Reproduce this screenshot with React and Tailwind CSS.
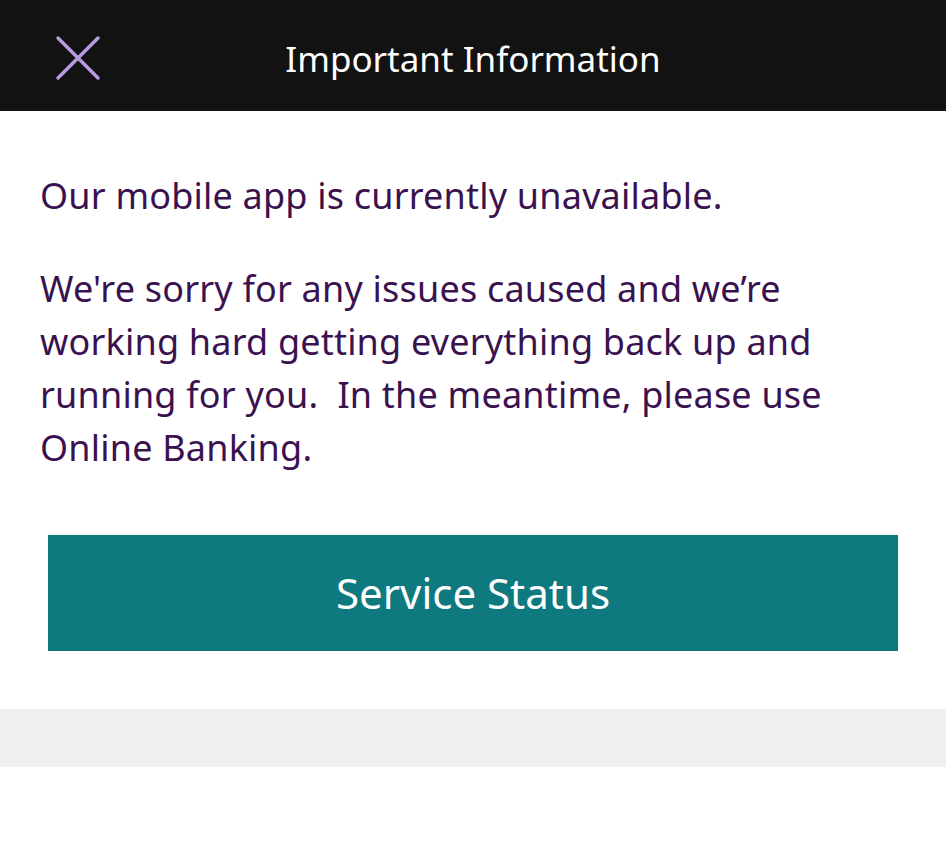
export default function App() {
  return (
    <div className="w-[946px] h-[845px] bg-white font-['Noto_Sans','Open_Sans',sans-serif]">
      <header className="h-[111px] bg-[#121212] flex items-center relative">
        <button className="absolute left-[55px] top-[35px] w-[46px] h-[46px]">
          <svg viewBox="0 0 46 46" className="w-[46px] h-[46px]">
            <path d="M3 3 L43 43 M43 3 L3 43" stroke="#b79ae0" strokeWidth="3.5" strokeLinecap="round" fill="none" />
          </svg>
        </button>
        <h1 className="w-full text-center text-white text-[35px] pt-[8px]">Important Information</h1>
      </header>

      <main className="px-[40px] text-[#3a1250] text-[36px] leading-[53px] tracking-[0.2px]">
        <p className="pt-[58px]">Our mobile app is currently unavailable.</p>
        <p className="mt-[40px]">
          We're sorry for any issues caused and we’re<br />
          working hard getting everything back up and<br />
          running for you.&nbsp; In the meantime, please use<br />
          Online Banking.
        </p>
      </main>

      <div className="px-[48px] mt-[61px]">
        <button className="w-full h-[116px] bg-[#0e7a80] text-white text-[42px] flex items-center justify-center pb-[2px]">
          Service Status
        </button>
      </div>

      <div className="mt-[58px] h-[58px] bg-[#efefef]" />
    </div>
  )
}
